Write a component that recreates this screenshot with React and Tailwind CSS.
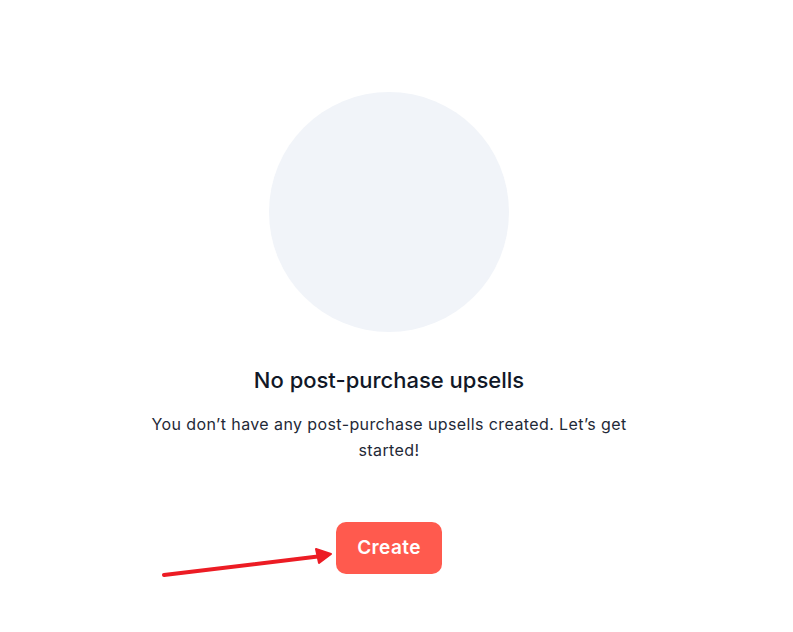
export default function App() {
  return (
    <div
      className="relative min-h-[632px] w-full bg-white"
      style={{ fontFamily: "Inter, 'Noto Sans', sans-serif" }}
    >
      <div className="flex w-[778px] flex-col items-center pt-[92px]">
        <div className="h-[240px] w-[240px] rounded-full bg-[#f1f4f9]" />
        <h2 className="mt-[33px] text-[22px] font-medium leading-[30px] text-[#111827]">
          No post-purchase upsells
        </h2>
        <p className="mt-[16px] w-[500px] text-center text-[16px] leading-[26px] tracking-[0.4px] text-[#1f2937]">
          You don’t have any post-purchase upsells created. Let’s get started!
        </p>
        <button className="mt-[59px] h-[52px] rounded-[10px] bg-[#ff5a4e] px-[21px] text-[19px] font-semibold tracking-[0.4px] text-white">
          Create
        </button>
      </div>

      <svg
        className="pointer-events-none absolute left-0 top-0"
        width="793"
        height="632"
        viewBox="0 0 793 632"
      >
        <line
          x1="164"
          y1="575"
          x2="322"
          y2="556"
          stroke="#ec1c24"
          strokeWidth="4"
          strokeLinecap="round"
        />
        <path d="M316 549 L331 554 L319 563 Z" fill="#ec1c24" stroke="#ec1c24" strokeWidth="2" strokeLinejoin="round" />
      </svg>
    </div>
  );
}
